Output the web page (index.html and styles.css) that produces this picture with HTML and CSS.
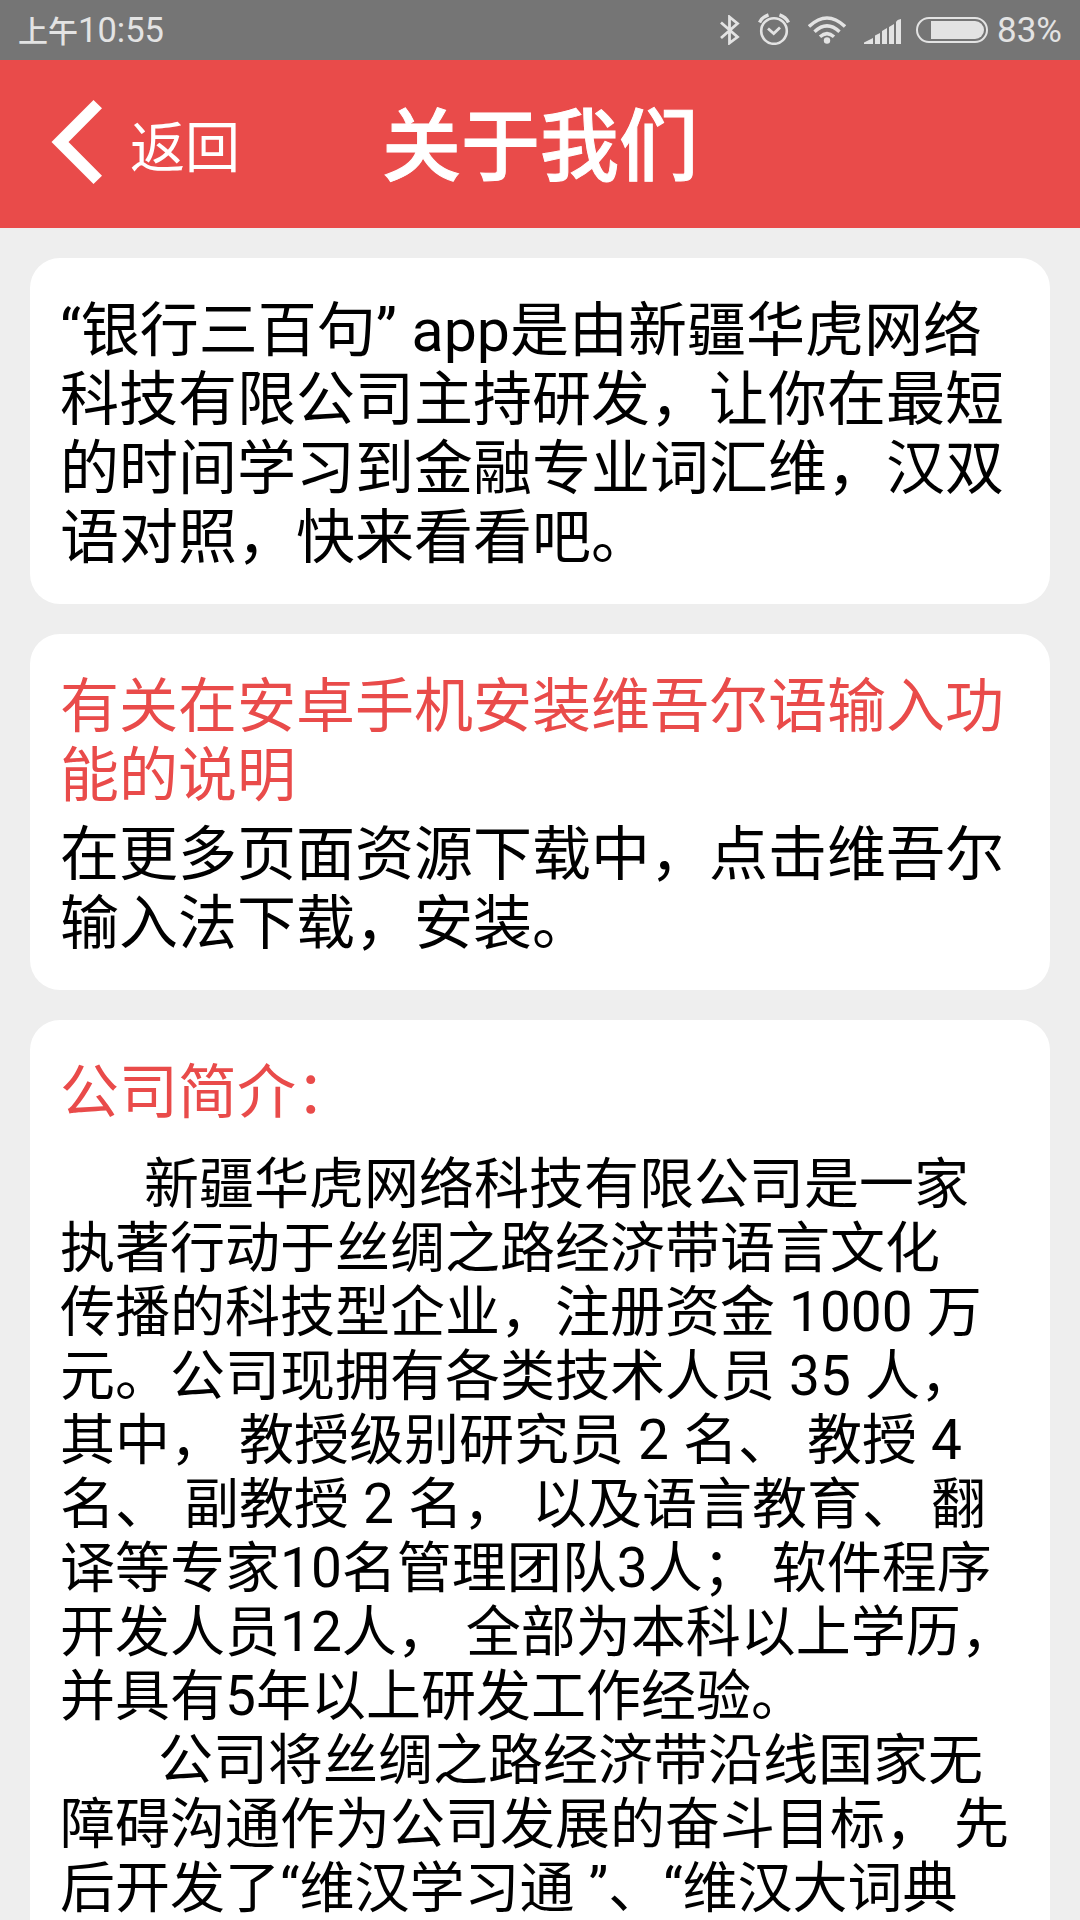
FILE: index.html
```html
<!DOCTYPE html>
<html lang="zh-CN">
<head>
    <meta charset="UTF-8">
    <meta name="viewport" content="width=device-width, initial-scale=1.0">
    <title>关于我们</title>
    <link rel="stylesheet" href="styles.css">
</head>
<body>
    <!-- Status bar -->
    <div class="status">
        <div class="time"><span class="ampm">上午</span>10:55</div>
        <div class="icons">
            <svg class="bluetooth" width="20" height="30" viewBox="0 0 20 30" fill="none" stroke="#e3e3e3" stroke-width="2.8">
                <path d="M1 7.5L17.5 22L9.500 28V2L17.500 8.500L1 23"/>
            </svg>
            <svg class="alarm" width="32" height="32" viewBox="0 0 32 32" fill="none" stroke="#e3e3e3">
                <circle cx="16" cy="18" r="12.800" stroke-width="2.600"/>
                <path d="M10 15.500L15.700 20.500L22 14.500" stroke-width="2.800"/>
                <path d="M1.500 9.500Q4 4 10.500 1.800M30.500 9.500Q28 4 21.500 1.800" stroke-width="3.400"/>
            </svg>
            <svg class="wifi" width="38" height="28" viewBox="0 0 38 28" fill="none" stroke="#e3e3e3" stroke-width="3.400">
                <path d="M1 10.500Q19 -6.500 37 10.500"/>
                <path d="M6.500 15.800Q19 4 31.500 15.800"/>
                <path d="M12 20.800Q19 14.500 26 20.800"/>
                <circle cx="19" cy="24.500" r="3.200" fill="#e3e3e3" stroke="none"/>
            </svg>
            <svg class="signal" width="37" height="25" viewBox="0 0 37 25" fill="#e3e3e3">
                <path d="M0 25V23.500L9 19V25ZM11 25V16.500L16 14V25ZM18 25V12L23 9V25ZM25 25V8L30 5V25ZM32 25V3Q33 .5 37 0V25Z"/>
            </svg>
            <svg class="battery" width="72" height="26" viewBox="0 0 72 26" fill="none">
                <rect x="1" y="1" width="70" height="24" rx="12" stroke="#e3e3e3" stroke-width="2"/>
                <path d="M15 4H59A9 9 0 0 1 59 22H15Z" fill="#e3e3e3"/>
            </svg>
            <span class="percent">83%</span>
        </div>
    </div>

    <!-- Page header -->
    <div class="header">
        <a class="back" href="#">
            <svg width="51" height="84" viewBox="0 0 51 84" fill="#fff">
                <path d="M0.500 42L42.500 0L51 8.200L17.500 42L51 75.800L42.500 84Z"/>
            </svg>
            <span>返回</span>
        </a>
        <h1>关于我们</h1>
    </div>

    <!-- Content cards -->
    <div class="content">
        <div class="card">
            <p>“银行三百句” app是由新疆华虎网络<br>科技有限公司主持研发，让你在最短<br>的时间学习到金融专业词汇维，汉双<br>语对照，快来看看吧。</p>
        </div>
        <div class="card">
            <h2>有关在安卓手机安装维吾尔语输入功<br>能的说明</h2>
            <p>在更多页面资源下载中，点击维吾尔<br>输入法下载，安装。</p>
        </div>
        <div class="card intro">
            <h2>公司简介：</h2>
            <p class="first">新疆华虎网络科技有限公司是一家<br>执著行动于丝绸之路经济带语言文化<br>传播的科技型企业，注册资金 1000 万<br>元。公司现拥有各类技术人员 35 人，<br>其中， 教授级别研究员 2 名、 教授 4<br>名、 副教授 2 名， 以及语言教育、 翻<br>译等专家10名管理团队3人； 软件程序<br>开发人员12人， 全部为本科以上学历，<br>并具有5年以上研发工作经验。</p>
            <p class="second">公司将丝绸之路经济带沿线国家无<br>障碍沟通作为公司发展的奋斗目标， 先<br>后开发了“维汉学习通 ”、“维汉大词典</p>
        </div>
    </div>
</body>
</html>
```

FILE: styles.css
```css
/* General styling */
body {
    margin: 0;
    height: 1920px;
    overflow: hidden;
    background-color: #eee;
    color: #000;
    font-family: Roboto, "Noto Sans CJK SC", sans-serif;
}
h1, h2, p {
    margin: 0;
    font-weight: 400;
}

/* Status bar */
.status {
    display: flex;
    justify-content: space-between;
    box-sizing: border-box;
    height: 60px;
    padding: 0 18px;
    background-color: #757575;
    color: #e3e3e3;
    font-size: 34.5px;
    line-height: 60px;
}
.ampm {
    font-size: 30px;
    font-weight: 500;
}
.icons {
    display: flex;
    align-items: center;
}
.alarm {
    margin-left: 18px;
    margin-top: -3px;
}
.wifi {
    margin-left: 18px;
}
.signal {
    margin-left: 18px;
    margin-top: 2px;
}
.battery {
    margin-left: 15px;
}
.percent {
    margin-left: 9px;
    padding-top: 1px;
    font-size: 35px;
}

/* Header */
.header {
    display: grid;
    grid-template-columns: 1fr auto 1fr;
    align-items: center;
    height: 168px;
    background-color: #e94b4a;
    color: #fff;
}
.back {
    display: flex;
    align-items: center;
    margin-left: 51px;
    color: #fff;
    font-size: 55px;
    line-height: 84px;
    text-decoration: none;
}
.back svg {
    margin-top: -4px;
}
.back span {
    margin-left: 28px;
    padding-top: 7px;
}
.header h1 {
    padding-top: 7px;
    font-size: 79px;
    font-weight: 500;
    line-height: 100px;
    -webkit-text-stroke: 1px #fff;
}

/* Cards */
.content {
    display: flex;
    flex-direction: column;
    gap: 30px;
    padding: 30px;
}
.card {
    padding: 38px 30px 32px;
    border-radius: 30px;
    background-color: #fff;
    font-size: 59px;
    line-height: 69px;
    white-space: nowrap;
}
.card h2 {
    margin-bottom: 10px;
    color: #e94b4a;
    font-size: 59px;
}
.intro h2 {
    margin-bottom: 25px;
}
.intro p {
    font-size: 55px;
    line-height: 64px;
    word-spacing: 0.4px;
}
.first {
    text-indent: 84px;
}
.second {
    text-indent: 98px;
}
```
